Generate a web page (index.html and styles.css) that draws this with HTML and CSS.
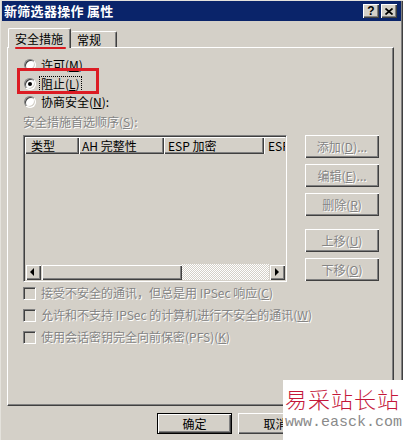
FILE: index.html
```html
<!DOCTYPE html>
<html lang="zh-CN">
<head>
<meta charset="utf-8">
<title>新筛选器操作 属性</title>
<link rel="stylesheet" href="styles.css">
</head>
<body>
<div class="window">
  <div class="titlebar">
    <span class="title">新筛选器操作 属性</span>
    <div class="tbtns">
      <span class="tbtn q">?</span>
      <span class="tbtn"><svg width="8" height="7" viewBox="0 0 8 7"><path d="M0.5 0.5 L7.5 6.5 M7.5 0.5 L0.5 6.5" stroke="#000" stroke-width="1.7" fill="none"/></svg></span>
    </div>
  </div>

  <div class="tabs">
    <div class="tab active">安全措施</div>
    <div class="tab">常规</div>
  </div>

  <div class="panel">
    <div class="radios">
      <div class="opt"><span class="radio"></span><span>许可(<u>M</u>)</span></div>
      <div class="opt"><span class="radio checked"></span><span class="focus">阻止(<u>L</u>)</span></div>
      <div class="opt"><span class="radio"></span><span>协商安全(<u>N</u>):</span></div>
    </div>
    <div class="caption dim">安全措施首选顺序(<u>S</u>):</div>

    <div class="main">
      <div class="list">
        <div class="lheader">
          <div class="hcell c1">类型</div>
          <div class="hcell c2">AH 完整性</div>
          <div class="hcell c3">ESP 加密</div>
          <div class="hcell c4">ESP</div>
        </div>
        <div class="lbody"></div>
        <div class="hscroll">
          <span class="sbtn"><svg width="16" height="16" viewBox="0 0 16 16"><polygon points="5,8 9,4 9,12" fill="#000"/></svg></span>
          <span class="thumb"></span>
          <span class="track"></span>
          <span class="sbtn"><svg width="16" height="16" viewBox="0 0 16 16"><polygon points="10,8 6,4 6,12" fill="#000"/></svg></span>
        </div>
      </div>
      <div class="side">
        <div class="btn dim">添加(<u>D</u>)...</div>
        <div class="btn dim">编辑(<u>E</u>)...</div>
        <div class="btn dim">删除(<u>R</u>)</div>
        <div class="btn dim gapped">上移(<u>U</u>)</div>
        <div class="btn dim">下移(<u>O</u>)</div>
      </div>
    </div>

    <div class="checks">
      <div class="chk"><span class="box"></span><span class="dim">接受不安全的通讯，但总是用 IPSec 响应(<u>C</u>)</span></div>
      <div class="chk"><span class="box"></span><span class="dim">允许和不支持 IPSec 的计算机进行不安全的通讯(<u>W</u>)</span></div>
      <div class="chk"><span class="box"></span><span class="dim">使用会话密钥完全向前保密(PFS)(<u>K</u>)</span></div>
    </div>
  </div>

  <div class="footer">
    <div class="btn fbtn default">确定</div>
    <div class="btn fbtn">取消</div>
  </div>

  <div class="mark-line"></div>
  <div class="mark-box"></div>

  <div class="watermark">
    <div class="wm-cn">易采站长站</div>
    <div class="wm-url">www.easck.com</div>
  </div>
</div>
</body>
</html>
```

FILE: styles.css
```css
* { box-sizing: border-box; }

body {
  margin: 0;
  background: #d4d0c8;
  font-family: "Noto Sans CJK SC", "Liberation Sans", sans-serif;
  font-size: 12px;
  color: #000;
}

.window {
  position: relative;
  width: 403px;
  height: 440px;
  overflow: hidden;
  background: #d4d0c8;
  padding: 1px 2px 0 2px;
  box-shadow: inset 1px 1px 0 #e4e2dc, inset -1px 0 0 #404040, inset -2px 0 0 #808080;
}

/* title bar */
.titlebar {
  height: 20px;
  background: #0a246a;
  display: flex;
  align-items: center;
  justify-content: space-between;
  padding: 0 4px 0 2px;
}
.title {
  color: #fff;
  font-weight: bold;
  font-size: 13px;
  line-height: 20px;
  letter-spacing: 0.3px;
}
.tbtns { display: flex; gap: 2px; }
.tbtn {
  width: 16px;
  height: 14px;
  background: #d4d0c8;
  box-shadow: inset 1px 1px 0 #fff, inset -1px -1px 0 #404040, inset -2px -2px 0 #808080;
  display: flex;
  align-items: center;
  justify-content: center;
}
.tbtn.q {
  font: bold 12px/14px "Liberation Sans", sans-serif;
}

/* tabs */
.tabs {
  display: flex;
  align-items: flex-end;
  height: 20px;
  margin: 7px 0 -1px 6px;
  position: relative;
  z-index: 1;
}
.tab {
  height: 16px;
  margin-bottom: 1px;
  padding: 0 6px;
  line-height: 16px;
  background: #d4d0c8;
  border-top: 1px solid #fff;
  border-left: 1px solid #fff;
  border-right: 1px solid #404040;
  box-shadow: inset -1px 0 0 #808080;
  border-radius: 2px 2px 0 0;
}
.tab.active {
  height: 20px;
  margin-bottom: 0;
  width: 63px;
  padding: 2px 0 0 6px;
}
.tab + .tab { width: 46px; border-left: none; }

/* panel */
.panel {
  margin-left: 5px;
  width: 387px;
  height: 359px;
  border-top: 1px solid #fff;
  border-left: 1px solid #fff;
  border-right: 1px solid #404040;
  border-bottom: 1px solid #404040;
  box-shadow: inset -1px -1px 0 #808080;
  padding: 8px 0 0 15px;
}

.radios { display: flex; flex-direction: column; }
.opt {
  height: 18.5px;
  display: flex;
  align-items: center;
  gap: 5px;
  padding-left: 1px;
  line-height: 14px;
}
.radio {
  width: 12px;
  height: 12px;
  border-radius: 50%;
  border: 1px solid;
  border-color: #808080 #fff #fff #808080;
  background: #fff;
  box-shadow: inset 1px 1px 0 #404040, inset -1px -1px 0 #d4d0c8;
  display: flex;
  align-items: center;
  justify-content: center;
}
.radio.checked::after {
  content: "";
  width: 4px;
  height: 4px;
  border-radius: 50%;
  background: #000;
}
.focus {
  outline: 1px dotted #000;
  outline-offset: 0;
  padding: 0 1px;
  margin-left: -1px;
}

.dim {
  color: #858585;
  text-shadow: 1px 1px 0 #fff;
}

.caption {
  height: 18px;
  line-height: 18px;
  margin-top: 1.5px;
}

.main {
  display: flex;
  margin-top: 4px;
}

.list {
  width: 264px;
  height: 147px;
  border: 1px solid;
  border-color: #808080 #fff #fff #808080;
  box-shadow: inset 1px 1px 0 #404040, inset -1px -1px 0 #d4d0c8;
  padding: 1px;
  display: flex;
  flex-direction: column;
}
.lheader {
  display: flex;
  height: 17px;
  overflow: hidden;
  flex: none;
}
.hcell {
  flex: none;
  height: 17px;
  line-height: 17px;
  white-space: nowrap;
  overflow: hidden;
  padding-left: 6px;
  box-shadow: inset 1px 1px 0 #fff, inset -1px -1px 0 #404040, inset -2px -2px 0 #808080;
}
.c1 { width: 54px; }
.c2 { width: 85px; padding-left: 3px; }
.c3 { width: 100px; padding-left: 4px; }
.c4 { width: 21px; padding-left: 4px; box-shadow: inset 1px 1px 0 #fff; }

.lbody { flex: 1; }

.hscroll {
  flex: none;
  height: 16px;
  display: flex;
}
.sbtn, .thumb {
  flex: none;
  height: 16px;
  background: #d4d0c8;
  box-shadow: inset 1px 1px 0 #d4d0c8, inset 2px 2px 0 #fff, inset -1px -1px 0 #404040, inset -2px -2px 0 #808080;
}
.sbtn { width: 16px; display: block; }
.sbtn svg { display: block; }
.thumb { width: 141px; }
.track {
  flex: 1;
  background: repeating-conic-gradient(#d4d0c8 0 25%, #fff 0 50%) 0 0 / 2px 2px;
}

.side {
  margin-left: 18px;
  width: 74px;
  display: flex;
  flex-direction: column;
  gap: 6px;
}
.btn {
  height: 23px;
  display: flex;
  align-items: center;
  justify-content: center;
  background: #d4d0c8;
  box-shadow: inset 1px 1px 0 #fff, inset -1px -1px 0 #404040, inset -2px -2px 0 #808080;
  white-space: nowrap;
  line-height: 14px;
}
.side .gapped { margin-top: 7px; }

.checks {
  margin-top: 0;
  display: flex;
  flex-direction: column;
}
.chk {
  height: 22px;
  display: flex;
  align-items: center;
  gap: 5px;
  line-height: 14px;
}
.box {
  width: 13px;
  height: 13px;
  border: 1px solid;
  border-color: #808080 #fff #fff #808080;
  box-shadow: inset 1px 1px 0 #404040, inset -1px -1px 0 #d4d0c8;
  background: #d4d0c8;
  flex: none;
}

.footer {
  display: flex;
  justify-content: flex-end;
  gap: 6px;
  margin-top: 7px;
  padding-right: 88px;
}
.fbtn {
  width: 75px;
  height: 21px;
}
.fbtn.default {
  box-shadow: inset 0 0 0 1px #000, inset 2px 2px 0 #fff, inset -2px -2px 0 #404040, inset -3px -3px 0 #808080;
}

/* red annotations drawn over the dialog */
.mark-line {
  position: absolute;
  left: 15px;
  top: 47px;
  width: 51px;
  height: 2px;
  background: #d8191f;
  border-radius: 1px;
  z-index: 2;
}
.mark-box {
  position: absolute;
  left: 17px;
  top: 68px;
  width: 82px;
  height: 26px;
  border: 3px solid #dc1c24;
}

/* watermark overlay */
.watermark {
  position: absolute;
  left: 283px;
  top: 380px;
  width: 120px;
  height: 60px;
  background: #fff;
  padding: 5px 0 0 2px;
}
.wm-cn {
  color: #c4173a;
  font-size: 22px;
  line-height: 26px;
  letter-spacing: 1px;
  font-weight: 300;
}
.wm-url {
  margin-top: 3px;
  color: #8a8a8a;
  font-family: "Liberation Mono", monospace;
  font-size: 15px;
  line-height: 18px;
}
```
